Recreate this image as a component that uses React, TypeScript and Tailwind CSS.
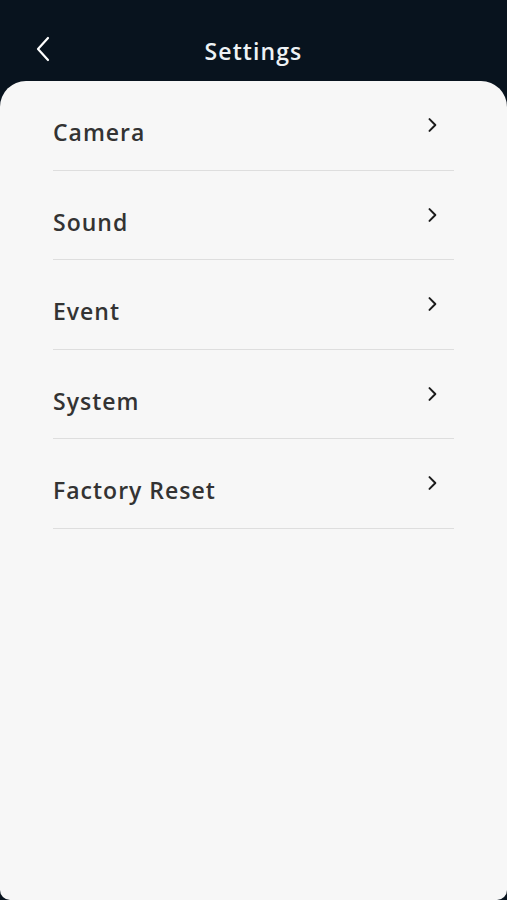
import React from 'react';

const items = ['Camera', 'Sound', 'Event', 'System', 'Factory Reset'];

const Chevron = ({ className }: { className?: string }) => (
  <svg viewBox="0 0 24 24" className={className} fill="none" stroke="currentColor" strokeWidth={2.4} strokeLinecap="round" strokeLinejoin="round">
    <path d="M9 5l7 7-7 7" />
  </svg>
);

const App = () => {
  return (
    <div className="w-[507px] h-[900px] bg-[#08131e] flex flex-col overflow-hidden" style={{ fontFamily: '"Open Sans", "Noto Sans", sans-serif' }}>
      {/* Header */}
      <header className="h-[81px] relative flex items-center justify-center shrink-0">
        <button className="absolute left-[35px] top-[36px] text-white">
          <svg viewBox="0 0 16 26" className="w-[16px] h-[26px]" fill="none" stroke="currentColor" strokeWidth={2.2} strokeLinecap="round" strokeLinejoin="round">
            <path d="M13 2L3 13l10 11" />
          </svg>
        </button>
        <h1 className="text-[23px] font-semibold tracking-[1.1px] mt-[22px] text-[#eef2f5]">Settings</h1>
      </header>

      {/* Card */}
      <main className="flex-1 bg-[#f7f7f7] rounded-t-[26px] rounded-b-[10px] px-[53px]">
        {items.map((label) => (
          <div key={label} className="flex justify-between border-b border-[#dedede] h-[89.5px] pt-[36px]">
            <span className="text-[23px] leading-[30px] font-semibold text-[#333333] tracking-[1px]">{label}</span>
            <Chevron className="w-[20px] h-[20px] text-[#1c1c1c] mr-[12px] -mt-[2px]" />
          </div>
        ))}
      </main>
    </div>
  );
};

export default App;
